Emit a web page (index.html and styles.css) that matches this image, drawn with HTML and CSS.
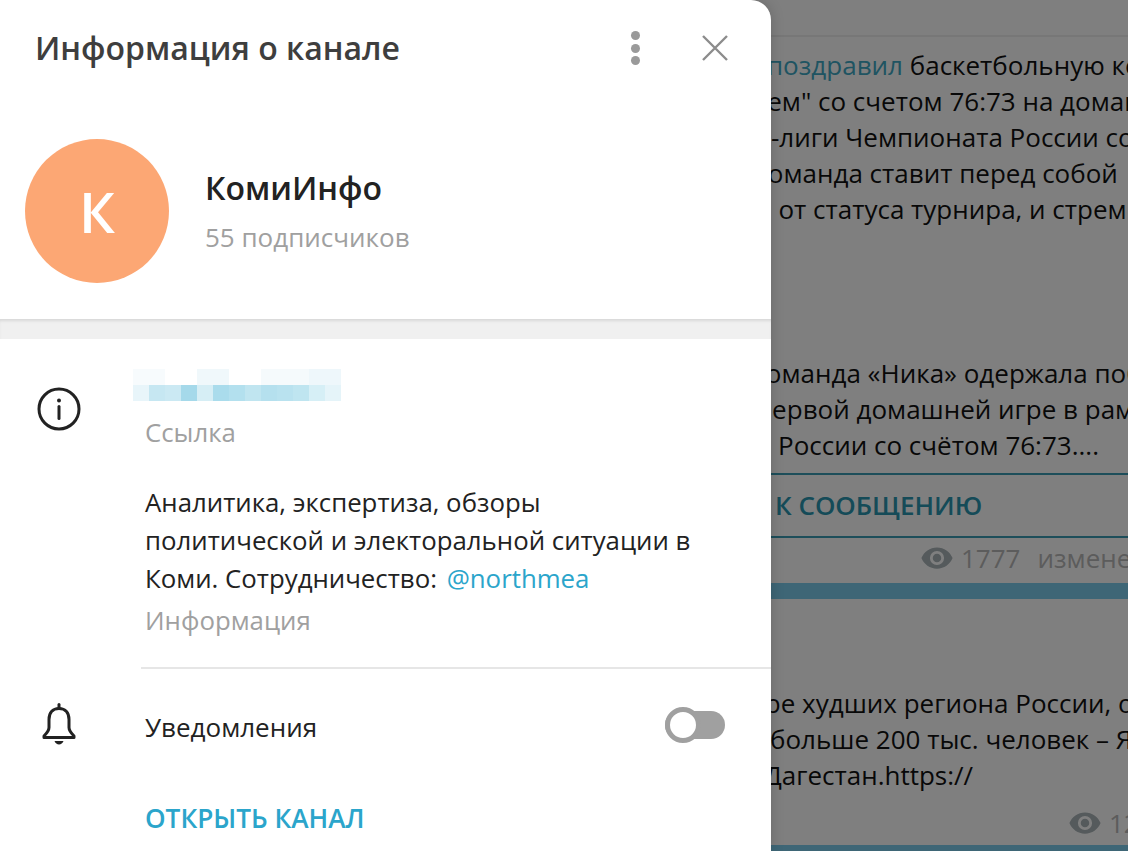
FILE: index.html
```html
<!DOCTYPE html>
<html lang="ru">
<head>
<meta charset="utf-8">
<title>Информация о канале</title>
<link rel="stylesheet" href="styles.css">
</head>
<body>
<div class="app">
  <main class="feed">
    <div class="feed-top"></div>
    <article class="msg msg-first">
      <p class="line l1"><span class="link">поздравил</span> баскетбольную команду</p>
      <p class="line l2">тем" со счетом 76:73 на домашней</p>
      <p class="line l3">-лиги Чемпионата России со</p>
      <p class="line l4">Команда ставит перед собой</p>
      <p class="line l5">о от статуса турнира, и стремится</p>
      <div class="gap"></div>
      <p class="line l4b">Команда «Ника» одержала победу</p>
      <p class="line l6">первой домашней игре в рамках</p>
      <p class="line l7">России со счётом 76:73....</p>
      <div class="jump"><span>К СООБЩЕНИЮ</span></div>
      <div class="stats s1">
        <svg class="eye" viewBox="0 0 24 24"><path d="M12 4.500C7 4.500 2.700 7.600 1 12c1.700 4.400 6 7.500 11 7.500s9.300-3.100 11-7.500c-1.700-4.400-6-7.500-11-7.500zM12 17a5 5 0 1 1 0-10 5 5 0 0 1 0 10zm0-8a3 3 0 1 0 0 6 3 3 0 0 0 0-6z"/></svg>
        <span>1777</span><span class="edited">изменено</span>
      </div>
    </article>
    <div class="band"></div>
    <article class="msg msg-second">
      <p class="line l8">Четыре худших региона России, о</p>
      <p class="line l9">больше 200 тыс. человек – Я</p>
      <p class="line l10">Дагестан.https://</p>
      <div class="stats s2">
        <svg class="eye" viewBox="0 0 24 24"><path d="M12 4.500C7 4.500 2.700 7.600 1 12c1.700 4.400 6 7.500 11 7.500s9.300-3.100 11-7.500c-1.700-4.400-6-7.500-11-7.500zM12 17a5 5 0 1 1 0-10 5 5 0 0 1 0 10zm0-8a3 3 0 1 0 0 6 3 3 0 0 0 0-6z"/></svg>
        <span>12</span>
      </div>
    </article>
    <div class="band"></div>
  </main>

  <div class="dim"></div>

  <aside class="drawer">
    <header class="head">
      <h1 class="title">Информация о канале</h1>
      <button class="dots" aria-label="Меню"><i></i><i></i><i></i></button>
      <button class="close" aria-label="Закрыть">
        <svg viewBox="0 0 28 28" width="28" height="28"><path d="M2 2l24 24M26 2L2 26"/></svg>
      </button>
    </header>
    <section class="profile">
      <div class="avatar">К</div>
      <div class="names">
        <div class="name">КомиИнфо</div>
        <div class="subs">55 подписчиков</div>
      </div>
    </section>
    <div class="sep"></div>
    <section class="info">
      <div class="info-icon">
        <svg viewBox="0 0 44 44" width="44" height="44"><circle cx="22" cy="22" r="20" class="stroke"/><path d="M22 19.500v12" class="stroke"/><circle cx="22" cy="13.500" r="2" class="fill"/></svg>
      </div>
      <div class="info-body">
        <svg class="blur" width="208" height="32" viewBox="0 0 208 32" shape-rendering="crispEdges">
          <rect x="0" y="0" width="32" height="16" fill="#f7fbfd"/><rect x="64" y="0" width="32" height="16" fill="#f0f8fb"/><rect x="128" y="0" width="48" height="16" fill="#f5fafc"/><rect x="176" y="0" width="32" height="16" fill="#eef7fb"/>
          <rect x="0" y="16" width="16" height="16" fill="#e8f5fa"/><rect x="16" y="16" width="16" height="16" fill="#c6e7f2"/><rect x="32" y="16" width="16" height="16" fill="#cbe9f3"/><rect x="48" y="16" width="16" height="16" fill="#a5d9ea"/><rect x="64" y="16" width="16" height="16" fill="#d6eef5"/><rect x="80" y="16" width="16" height="16" fill="#aadcec"/><rect x="96" y="16" width="16" height="16" fill="#b3e0ee"/><rect x="112" y="16" width="16" height="16" fill="#c0e5f0"/><rect x="128" y="16" width="16" height="16" fill="#b5e0ee"/><rect x="144" y="16" width="16" height="16" fill="#b9e2ef"/><rect x="160" y="16" width="16" height="16" fill="#bfe5f0"/><rect x="176" y="16" width="16" height="16" fill="#d6eff6"/><rect x="192" y="16" width="16" height="16" fill="#e5f4f9"/>
        </svg>
        <div class="caption caption-link">Ссылка</div>
        <p class="about">Аналитика, экспертиза, обзоры<br>политической и электоральной ситуации в<br>Коми. Сотрудничество: <a class="mention">@northmea</a></p>
        <div class="caption">Информация</div>
      </div>
    </section>
    <div class="divider"></div>
    <section class="notify">
      <div class="bell">
        <svg viewBox="0 0 36 42" width="36" height="42"><path d="M18 5.500c-6.500 0-10 4.500-10 11v8c0 3-2 5.500-5 8.500v1.500h30V33c-3-3-5-5.500-5-8.500v-8c0-6.500-3.500-11-10-11z" class="stroke"/><path d="M18 1.500v4" class="stroke"/><path d="M13.500 38h9c-.8 2.300-2.500 3.500-4.500 3.500s-3.700-1.200-4.500-3.500z" class="fill"/></svg>
      </div>
      <div class="notify-label">Уведомления</div>
      <div class="toggle"><span class="thumb"></span></div>
    </section>
    <a class="open">ОТКРЫТЬ КАНАЛ</a>
  </aside>
</div>
</body>
</html>
```

FILE: styles.css
```css
* { box-sizing: border-box; }
html, body { margin: 0; height: 100%; }
body { font-family: "Open Sans", "Noto Sans", sans-serif; overflow: hidden; background: #fff; }
.app { position: relative; width: 1128px; height: 851px; overflow: hidden; }

/* feed behind the drawer */
.feed { width: 1128px; height: 851px; background: #fff; overflow: hidden; }
.feed-top { height: 37px; border-bottom: 2px solid #eeeeee; }
.msg { overflow: hidden; }
.msg-first { padding-top: 10px; height: 546px; }
.msg-second { padding-top: 86px; height: 246px; }
.line { margin: 0; height: 36px; line-height: 36px; font-size: 26px; color: #111; white-space: nowrap; }
.link { color: #3fa9c4; }
.l1 { margin-left: 767px; }
.l2 { margin-left: 755px; }
.l3 { margin-left: 771px; }
.l4 { margin-left: 752px; }
.l4b { margin-left: 750px; }
.l5 { margin-left: 756px; }
.l6 { margin-left: 756px; }
.l7 { margin-left: 778px; }
.l8 { margin-left: 700px; }
.l9 { margin-left: 770px; }
.l10 { margin-left: 764px; }
.gap { height: 128px; }
.jump { margin-top: 10px; height: 65px; border-top: 2px solid #3b9db5; border-bottom: 2px solid #3b9db5; padding: 0 0 2px 775px; display: flex; align-items: center; }
.jump span { font-size: 26px; font-weight: 600; color: #2a96b0; white-space: nowrap; }
.stats { display: flex; align-items: center; height: 44px; font-size: 26px; color: #b8b8b8; white-space: nowrap; }
.s1 { padding-left: 920px; margin-top: -2px; }
.s2 { padding-left: 1068px; margin-top: 8px; }
.eye { width: 34px; height: 34px; fill: #aab4b8; margin-right: 7px; flex: none; }
.edited { margin-left: 17px; }
.band { height: 16px; background: #7ccced; }

.dim { position: absolute; inset: 0; background: rgba(0, 0, 0, .5); }

/* drawer */
.drawer { position: absolute; left: 0; top: 0; width: 771px; height: 851px; background: #fff; border-top-right-radius: 20px; box-shadow: 0 0 14px rgba(0, 0, 0, .18); overflow: hidden; }
.head { display: flex; align-items: center; height: 96px; padding: 0 0 2px 35px; }
.title { margin: 0; flex: 1; font-size: 32px; font-weight: 600; color: #3e3e3e; white-space: nowrap; }
button { border: 0; padding: 0; background: none; }
.dots { width: 10px; height: 34px; display: flex; flex-direction: column; justify-content: space-between; align-items: center; margin: 2px 61px 0 0; }
.dots i { width: 9px; height: 9px; border-radius: 50%; background: #9a9a9a; display: block; }
.close { width: 28px; height: 28px; margin: 2px 42px 0 0; }
.close path { stroke: #8c8c8c; stroke-width: 2.4; fill: none; }
.profile { height: 223px; padding: 43px 0 0 25px; display: flex; }
.avatar { width: 144px; height: 144px; border-radius: 50%; background: #fca774; color: #fff; font-size: 56px; font-weight: 600; display: flex; align-items: center; justify-content: center; flex: none; }
.names { margin-left: 36px; padding-top: 29px; }
.name { font-size: 32px; font-weight: 600; color: #222; line-height: 40px; }
.subs { font-size: 26px; color: #a0a0a0; line-height: 34px; margin-top: 12px; }
.sep { height: 20px; background: #f0f0f0; box-shadow: inset 0 3px 3px -1px rgba(0, 0, 0, .1); }
.info { display: flex; padding: 30px 0 0 37px; height: 328px; }
.info-icon { width: 44px; margin-top: 18px; flex: none; }
.stroke { fill: none; stroke: #222; stroke-width: 3; stroke-linecap: round; stroke-linejoin: round; }
.fill { fill: #222; }
.info-body { margin-left: 52px; }
.blur { display: block; }
.caption { font-size: 25.8px; color: #a0a0a0; line-height: 38px; margin-left: 12px; }
.caption-link { margin-top: 12px; }
.about { margin: 32px 0 4px 12px; font-size: 25.8px; line-height: 38px; color: #222; white-space: nowrap; }
.mention { color: #2ba5cb; margin-left: 3px; }
.divider { margin-left: 141px; height: 2px; background: #e6e6e6; }
.notify { display: flex; align-items: center; height: 112px; padding-left: 41px; position: relative; }
.bell { width: 36px; height: 42px; flex: none; margin-top: -2px; }
.notify-label { margin-left: 68px; margin-top: 4px; font-size: 26px; color: #222; flex: 1; }
.toggle { width: 60px; height: 28px; background: #a0a0a0; border-radius: 14px; margin-right: 46px; position: relative; }
.thumb { position: absolute; left: 0; top: -4px; width: 36px; height: 36px; border-radius: 50%; background: #fff; border: 5px solid #a0a0a0; }
.open { display: block; margin: 20px 0 0 145px; font-size: 26.2px; font-weight: 600; color: #2ba5cb; line-height: 34px; white-space: nowrap; }
```
